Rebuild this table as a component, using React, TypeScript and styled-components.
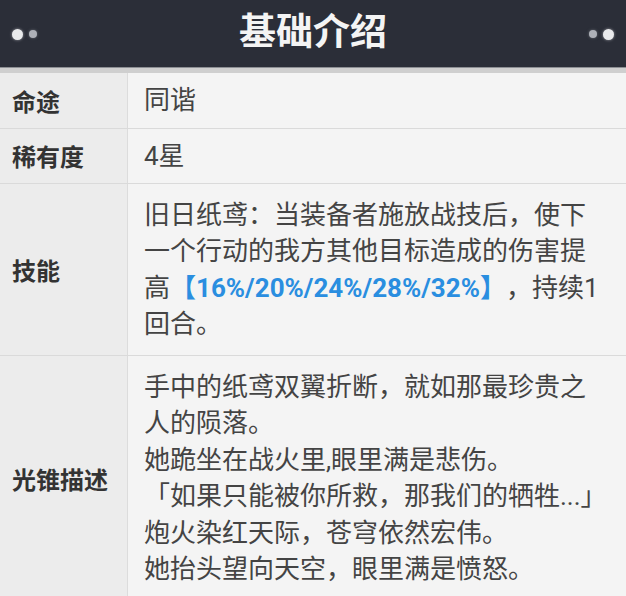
import React from "react";
import styled, { createGlobalStyle } from "styled-components";

const GlobalStyle = createGlobalStyle`
  html, body {
    margin: 0;
    padding: 0;
    background: #f3f3f3;
  }
  body {
    font-family: Roboto, "Noto Sans CJK SC", "Noto Sans", sans-serif;
    text-spacing-trim: space-all;
  }
`;

const Page = styled.div`
  width: 626px;
  height: 596px;
  overflow: hidden;
  background: #f3f3f3;
`;

const Header = styled.header`
  height: 68px;
  display: grid;
  grid-template-columns: 1fr auto 1fr;
  align-items: center;
  padding: 0 12px;
  background: #2b2e38;
  border-bottom: 5px solid #cfcfcf;
  box-shadow: inset 0 -1px 0 #8d8f94;
`;

const Title = styled.h1`
  margin: 0;
  padding-bottom: 10px;
  font-family: "Noto Sans CJK SC", sans-serif;
  font-size: 37px;
  line-height: 48px;
  font-weight: 700;
  color: #f4f4f4;
`;

const Dots = styled.div<{ $right?: boolean }>`
  display: flex;
  align-items: center;
  gap: 6px;
  justify-content: ${(p) => (p.$right ? "flex-end" : "flex-start")};
`;

const Dot = styled.span<{ $big?: boolean }>`
  display: block;
  width: ${(p) => (p.$big ? 11 : 8)}px;
  height: ${(p) => (p.$big ? 11 : 8)}px;
  border-radius: 50%;
  background: ${(p) => (p.$big ? "#e9eaec" : "#aeb1b8")};
  box-shadow: 0 0 3px ${(p) => (p.$big ? "rgba(230,230,235,0.6)" : "rgba(170,172,180,0.5)")};
`;

const Table = styled.div`
  display: flex;
  flex-direction: column;
`;

const Row = styled.div`
  display: grid;
  grid-template-columns: 128px 1fr;
  border-bottom: 1px solid #dadada;
`;

const Label = styled.div`
  display: flex;
  align-items: center;
  padding-left: 12px;
  background: #ececec;
  border-right: 1px solid #dcdcdc;
  font-family: "Noto Sans CJK SC", sans-serif;
  font-size: 24px;
  font-weight: 700;
  color: #333;
`;

const Value = styled.div<{ $dense?: boolean }>`
  padding: ${(p) => (p.$dense ? "9px" : "12.5px")} 16px;
  background: #f4f4f4;
  font-size: 26px;
  line-height: 36.5px;
  color: #444;
  white-space: nowrap;
`;

const Highlight = styled.span`
  color: #2a8ee0;
  font-weight: 700;
`;

interface Entry {
  id: number;
  label: string;
  lines: React.ReactNode[];
}

const entries: Entry[] = [
  { id: 1, label: "命途", lines: ["同谐"] },
  { id: 2, label: "稀有度", lines: ["4星"] },
  {
    id: 3,
    label: "技能",
    lines: [
      "旧日纸鸢：当装备者施放战技后，使下",
      "一个行动的我方其他目标造成的伤害提",
      <>
        高<Highlight>【16%/20%/24%/28%/32%】</Highlight>，持续1
      </>,
      "回合。",
    ],
  },
  {
    id: 4,
    label: "光锥描述",
    lines: [
      "手中的纸鸢双翼折断，就如那最珍贵之",
      "人的陨落。",
      "她跪坐在战火里,眼里满是悲伤。",
      "「如果只能被你所救，那我们的牺牲...」",
      "炮火染红天际，苍穹依然宏伟。",
      "她抬头望向天空，眼里满是愤怒。",
    ],
  },
];

const App: React.FC = () => {
  return (
    <Page>
      <GlobalStyle />
      <Header>
        <Dots>
          <Dot $big />
          <Dot />
        </Dots>
        <Title>基础介绍</Title>
        <Dots $right>
          <Dot />
          <Dot $big />
        </Dots>
      </Header>
      <Table>
        {entries.map((entry) => (
          <Row key={entry.id}>
            <Label>{entry.label}</Label>
            <Value $dense={entry.lines.length === 1}>
              {entry.lines.map((line, i) => (
                <div key={i}>{line}</div>
              ))}
            </Value>
          </Row>
        ))}
      </Table>
    </Page>
  );
};

export default App;
